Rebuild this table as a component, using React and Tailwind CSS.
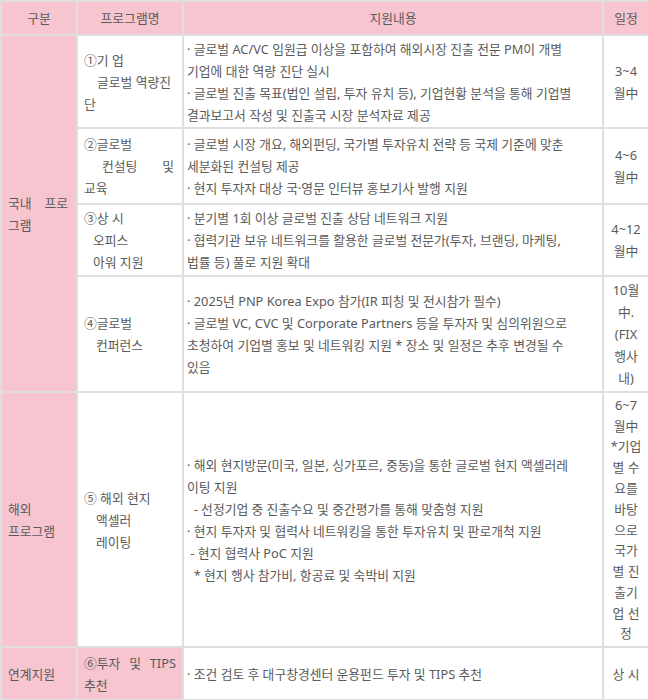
import React from "react";

const td = "border-2 border-[#dedede] align-middle";
const pink = "bg-[#f7c5d0]";

const Lines = ({ items, className = "" }) =>
  items.map((t, i) => (
    <div key={i} className={"whitespace-pre " + className}>
      {t}
    </div>
  ));

const rows = [
  {
    h: "h-[93px]",
    name: (
      <>
        <div>①기 업</div>
        <div className="pl-[13px]">글로벌 역량진</div>
        <div>단</div>
      </>
    ),
    body: [
      "· 글로벌 AC/VC 임원급 이상을 포함하여 해외시장 진출 전문 PM이 개별",
      "기업에 대한 역량 진단 실시",
      "· 글로벌 진출 목표(법인 설립, 투자 유치 등), 기업현황 분석을 통해 기업별",
      "결과보고서 작성 및 진출국 시장 분석자료 제공",
    ],
    when: ["3~4", "월中"],
  },
  {
    h: "h-[76px]",
    name: (
      <>
        <div>②글로벌</div>
        <div className="flex justify-between pl-[18px] pr-[4px]">
          <span>컨설팅</span>
          <span>및</span>
        </div>
        <div>교육</div>
      </>
    ),
    body: [
      "· 글로벌 시장 개요, 해외펀딩, 국가별 투자유치 전략 등 국제 기준에 맞춘",
      "세분화된 컨설팅 제공",
      "· 현지 투자자 대상 국·영문 인터뷰 홍보기사 발행 지원",
    ],
    when: ["4~6", "월中"],
  },
  {
    h: "h-[72px]",
    name: (
      <>
        <div>③상 시</div>
        <div className="pl-[9px]">오피스</div>
        <div className="pl-[9px]">아워 지원</div>
      </>
    ),
    body: [
      "· 분기별 1회 이상 글로벌 진출 상담 네트워크 지원",
      "· 협력기관 보유 네트워크를 활용한 글로벌 전문가(투자, 브랜딩, 마케팅,",
      "법률 등) 풀로 지원 확대",
    ],
    when: ["4~12", "월中"],
  },
  {
    h: "h-[116px]",
    name: (
      <>
        <div>④글로벌</div>
        <div className="pl-[12px]">컨퍼런스</div>
      </>
    ),
    body: [
      "· 2025년 PNP Korea Expo 참가(IR 피칭 및 전시참가 필수)",
      "· 글로벌 VC, CVC 및 Corporate Partners 등을 투자자 및 심의위원으로",
      "초청하여 기업별 홍보 및 네트워킹 지원 * 장소 및 일정은 추후 변경될 수",
      "있음",
    ],
    when: ["10월", "中.", "(FIX", "행사", "내)"],
  },
  {
    h: "h-[255px]",
    name: (
      <>
        <div>⑤ 해외 현지</div>
        <div className="pl-[12px]">액셀러</div>
        <div className="pl-[12px]">레이팅</div>
      </>
    ),
    body: [
      "· 해외 현지방문(미국, 일본, 싱가포르, 중동)을 통한 글로벌 현지 액셀러레",
      "이팅 지원",
      "  - 선정기업 중 진출수요 및 중간평가를 통해 맞춤형 지원",
      "· 현지 투자자 및 협력사 네트워킹을 통한 투자유치 및 판로개척 지원",
      " - 현지 협력사 PoC 지원",
      "  * 현지 행사 참가비, 항공료 및 숙박비 지원",
    ],
    when: ["6~7", "월中", "*기업", "별 수", "요를", "바탕", "으로", "국가", "별 진", "출기", "업 선", "정"],
    tight: true,
  },
  {
    h: "h-[53px]",
    pinkName: true,
    name: (
      <>
        <div className="flex justify-between pr-[2px]">
          <span>⑥투자</span>
          <span>및</span>
          <span>TIPS</span>
        </div>
        <div>추천</div>
      </>
    ),
    body: ["· 조건 검토 후 대구창경센터 운용펀드 투자 및 TIPS 추천"],
    when: ["상 시"],
  },
];

const groups = {
  0: { span: 4, label: (
    <>
      <div className="flex gap-[13px]">
        <span>국내</span>
        <span>프로</span>
      </div>
      <div>그램</div>
    </>
  ) },
  4: { span: 1, label: (
    <>
      <div>해외</div>
      <div>프로그램</div>
    </>
  ) },
  5: { span: 1, label: <div>연계지원</div> },
};

export default function App() {
  return (
    <div className="w-[648px] h-[700px] overflow-hidden bg-white font-['Noto_Sans','Noto_Sans_CJK_KR',sans-serif] text-[12.8px] leading-[22px] text-[#5a5a5a]">
      <table className="w-[648px] table-fixed border-collapse">
        <colgroup>
          <col className="w-[76px]" />
          <col className="w-[106px]" />
          <col className="w-[420px]" />
          <col className="w-[46px]" />
        </colgroup>
        <thead>
          <tr className={"h-[34px] " + pink}>
            <th className={td + " font-normal text-center"}>구분</th>
            <th className={td + " font-normal text-center"}>프로그램명</th>
            <th className={td + " font-normal text-center"}>지원내용</th>
            <th className={td + " font-normal text-center"}>일정</th>
          </tr>
        </thead>
        <tbody>
          {rows.map((r, i) => (
            <tr key={i} className={r.h}>
              {groups[i] && (
                <td rowSpan={groups[i].span} className={td + " " + pink + " pl-[6px] pr-[4px]"}>
                  {groups[i].label}
                </td>
              )}
              <td className={td + " pl-[6px] pr-[4px] " + (r.pinkName ? pink : "")}>{r.name}</td>
              <td className={td + " pl-[3px] pr-[2px]"}>
                <Lines items={r.body} />
              </td>
              <td className={td + " px-[1px] text-center " + (r.tight ? "leading-[20.8px]" : "")}>
                <Lines items={r.when} />
              </td>
            </tr>
          ))}
        </tbody>
      </table>
    </div>
  );
}
